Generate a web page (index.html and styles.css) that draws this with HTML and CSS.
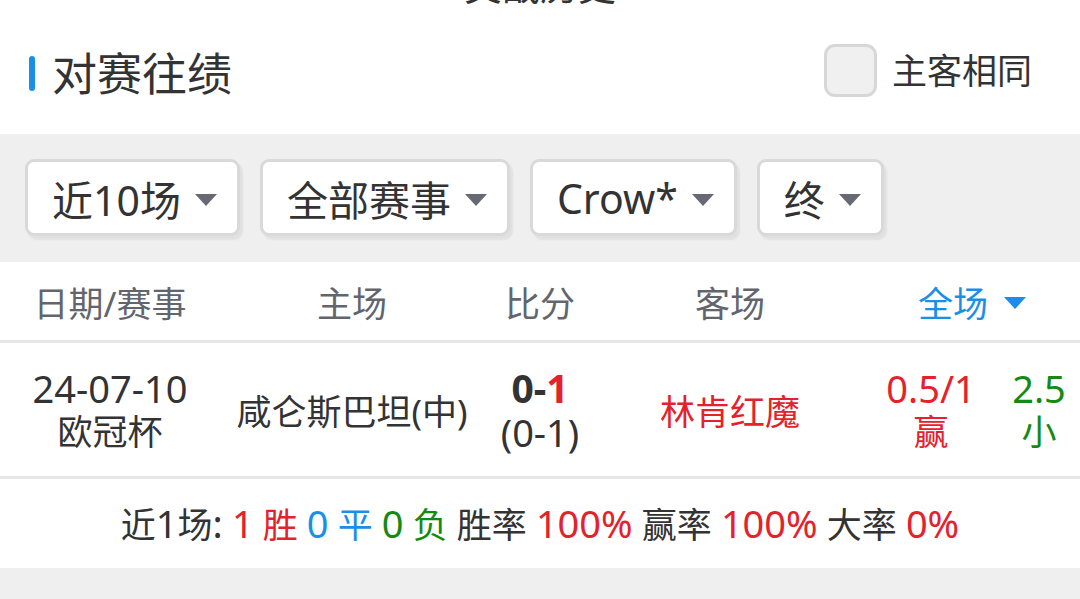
FILE: index.html
```html
<!DOCTYPE html>
<html lang="zh-CN">
<head>
<meta charset="utf-8">
<title>对赛往绩</title>
<link rel="stylesheet" href="styles.css">
</head>
<body>
<div class="page">
  <div class="cut-top"><span class="cut-text">交战历史</span></div>

  <div class="section-head">
    <div class="title">
      <span class="title-bar"></span>
      <span class="title-text">对赛往绩</span>
    </div>
    <label class="same">
      <span class="checkbox"></span>
      <span class="same-text">主客相同</span>
    </label>
  </div>

  <div class="filters">
    <div class="dropdown"><span>近10场</span><span class="caret"></span></div>
    <div class="dropdown"><span>全部赛事</span><span class="caret"></span></div>
    <div class="dropdown"><span>Crow*</span><span class="caret"></span></div>
    <div class="dropdown"><span>终</span><span class="caret"></span></div>
  </div>

  <div class="table">
    <div class="row head">
      <div class="cell">日期/赛事</div>
      <div class="cell">主场</div>
      <div class="cell">比分</div>
      <div class="cell">客场</div>
      <div class="cell span2 blue">全场<span class="caret blue-caret"></span></div>
    </div>
    <div class="row data">
      <div class="cell stack"><span class="n">24-07-10</span><span>欧冠杯</span></div>
      <div class="cell">咸仑斯巴坦(中)</div>
      <div class="cell stack score"><span class="ft">0-<em class="red">1</em></span><span class="n">(0-1)</span></div>
      <div class="cell red">林肯红魔</div>
      <div class="cell stack red"><span class="n">0.5/1</span><span>赢</span></div>
      <div class="cell stack green"><span class="n">2.5</span><span>小</span></div>
    </div>
    <div class="summary">近<span class="n">1</span>场<span class="n">:</span> <span class="red"><span class="n">1</span> 胜</span> <span class="blue"><span class="n">0</span> 平</span> <span class="green"><span class="n">0</span> 负</span> 胜率 <span class="red n">100%</span> 赢率 <span class="red n">100%</span> 大率 <span class="red n">0%</span></div>
  </div>
  <div class="bottom-gap"></div>
</div>
</body>
</html>
```
FILE: styles.css
```css
* { box-sizing: border-box; }
html, body { margin: 0; padding: 0; }
body {
  background: #fff;
  font-family: "Noto Sans", "Noto Sans CJK SC", sans-serif;
  color: #333;
}
.page { width: 1080px; }

.cut-top {
  height: 4px;
  overflow: hidden;
  text-align: center;
}
.cut-text {
  display: block;
  font-size: 38px;
  line-height: 38px;
  margin-top: -34px;
  color: #333;
}

.section-head {
  height: 130px;
  display: flex;
  align-items: center;
  justify-content: space-between;
  padding: 3px 48px 0 29px;
}
.title { display: flex; align-items: center; gap: 17px; margin-top: 6px; }
.title-bar {
  width: 6px;
  height: 35px;
  border-radius: 3px;
  background: #1a8fe8;
}
.title-text { font-size: 45px; line-height: 1; color: #333; }
.same { display: flex; align-items: center; gap: 15px; }
.checkbox {
  width: 53px;
  height: 53px;
  border: 3px solid #d7d7d7;
  border-radius: 11px;
  background: #f0f0f0;
}
.same-text { font-size: 35px; line-height: 1; color: #333; }

.filters {
  background: #efefef;
  height: 128px;
  padding: 25px 25px 0;
  display: flex;
  gap: 20px;
  align-items: flex-start;
}
.dropdown {
  height: 77px;
  background: #fff;
  border: 3px solid #d9d9d9;
  border-radius: 9px;
  box-shadow: 3px 4px 2px rgba(0,0,0,0.06);
  display: flex;
  align-items: center;
  gap: 14px;
  padding: 0 20px 0 24px;
  font-size: 41px;
  color: #333;
}
.caret {
  width: 0;
  height: 0;
  border-left: 11px solid transparent;
  border-right: 11px solid transparent;
  border-top: 12px solid #676a72;
  margin-top: 4px;
}

.table { background: #fff; }
.row {
  display: grid;
  grid-template-columns: 220px 264px 112px 268px 134px 82px;
  border-bottom: 3px solid #e6e6e6;
}
.row.head { height: 81px; align-items: center; }
.row.data { height: 136px; align-items: center; }
.cell {
  text-align: center;
  font-size: 35px;
  white-space: nowrap;
  display: flex;
  justify-content: center;
  align-items: center;
}
.head .cell { color: #62656b; font-size: 35px; }
.span2 { grid-column: span 2; gap: 16px; }
.head .blue { color: #1a8fe8; }
.blue-caret { border-top-color: #1a8fe8; margin-top: 4px; }
.stack {
  flex-direction: column;
  line-height: 44px;
}
.stack > span { display: block; height: 44px; line-height: 44px; }
.n { font-size: 38px; }
.data .cell { color: #333; }
.score .ft { font-weight: 700; font-size: 39px; }
em { font-style: normal; }
.data .red, .red { color: #e4222c; }
.data .green, .green { color: #138a13; }
.blue { color: #1a8fe8; }
.summary {
  height: 89px;
  line-height: 89px;
  text-align: center;
  font-size: 35px;
  color: #333;
  white-space: nowrap;
}
.bottom-gap { height: 40px; background: #efefef; }
```
